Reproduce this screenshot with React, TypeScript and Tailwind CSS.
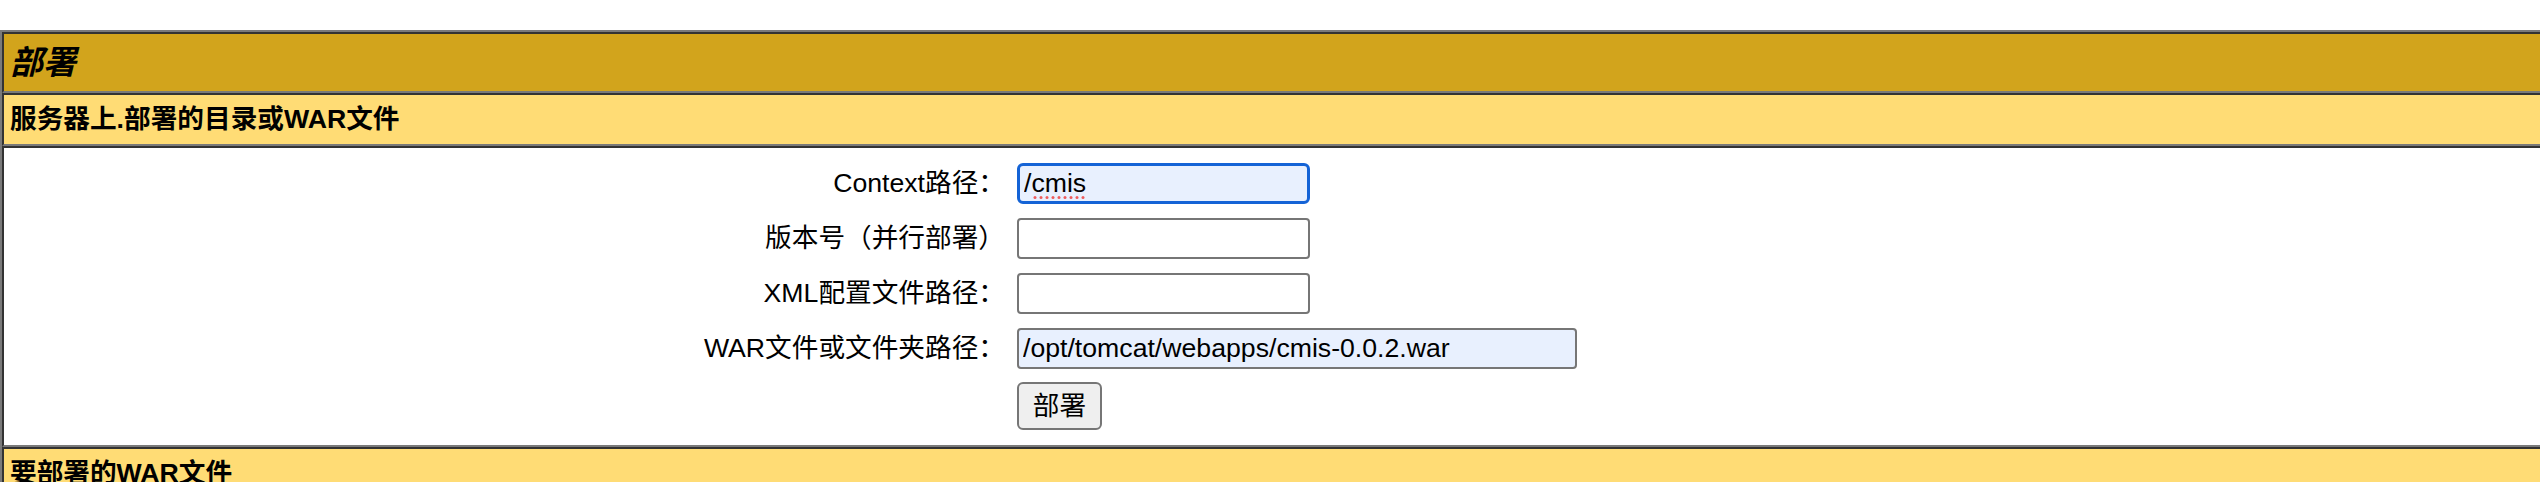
import React from "react";

const font = "font-['Liberation_Sans','Noto_Sans_CJK_SC',sans-serif]";

function Cell({
  className,
  children,
}: {
  className?: string;
  children?: React.ReactNode;
}) {
  return (
    <div
      className={`border-l-2 border-t-2 border-b-2 border-[#333333] border-b-[#7a7a7a] ${className ?? ""}`}
    >
      {children}
    </div>
  );
}

function SpellDots() {
  const xs = [0, 1, 2, 3, 4, 5, 6, 7, 8];
  return (
    <svg
      className="pointer-events-none absolute left-[15px] top-[32px]"
      width="56"
      height="5"
      viewBox="0 0 56 5"
    >
      {xs.map((i) => (
        <circle key={i} cx={3 + i * 6} cy={2.5} r={1.5} fill="#ee5b5b" />
      ))}
    </svg>
  );
}

type Row = {
  label: string;
  value?: string;
  wide?: boolean;
  focused?: boolean;
  filled?: boolean;
};

const rows: Row[] = [
  { label: "Context路径：", value: "/cmis", focused: true, filled: true },
  { label: "版本号（并行部署）" },
  { label: "XML配置文件路径：" },
  {
    label: "WAR文件或文件夹路径：",
    value: "/opt/tomcat/webapps/cmis-0.0.2.war",
    wide: true,
    filled: true,
  },
];

function Field({ row }: { row: Row }) {
  const width = row.wide ? "w-[560px]" : "w-[293px]";
  const bg = row.filled ? "bg-[#e8f0fe]" : "bg-white";
  const border = row.focused
    ? "border-[3px] border-[#1463d6] rounded-[6px] px-[4px]"
    : "border-2 border-[#767676] rounded-[4px] px-[4px]";
  return (
    <div className="relative">
      <input
        type="text"
        defaultValue={row.value ?? ""}
        spellCheck={false}
        className={`block h-[41px] ${width} ${bg} ${border} ${font} text-[26.67px] leading-[33px] text-black outline-none`}
      />
      {row.focused && <SpellDots />}
    </div>
  );
}

export default function App() {
  return (
    <div className={`h-[482px] w-full overflow-hidden bg-white pt-[30px] text-black ${font}`}>
      <div className="w-[2600px] border-l-2 border-t-2 border-[#7a7a7a]">
        <Cell className="bg-[#d2a41c] px-[6px] py-[6px]">
          <div className="text-[33px] font-bold italic leading-[45px]">部署</div>
        </Cell>
        <Cell className="bg-[#ffdc75] px-[6px] py-[6px]">
          <div className="text-[26.67px] font-bold leading-[37px]">
            服务器上.部署的目录或WAR文件
          </div>
        </Cell>
        <Cell className="bg-white pl-[6px] pt-[8px] pb-[9px]">
          <div className="grid grid-cols-[1001px_1fr]">
            {rows.map((row) => (
              <React.Fragment key={row.label}>
                <div className="flex h-[55px] items-center justify-end pr-[6px] text-[26.67px] leading-[37px]">
                  {row.label}
                </div>
                <div className="flex h-[55px] items-center pl-[6px]">
                  <Field row={row} />
                </div>
              </React.Fragment>
            ))}
            <div className="h-[60px]" />
            <div className="flex h-[60px] items-center pl-[6px]">
              <button
                type="button"
                className={`h-[48px] w-[85px] rounded-[6px] border-2 border-[#767676] bg-[#efefef] text-[26.67px] leading-[37px] text-black ${font}`}
              >
                部署
              </button>
            </div>
          </div>
        </Cell>
        <Cell className="bg-[#ffdc75] px-[6px] py-[6px]">
          <div className="text-[26.67px] font-bold leading-[37px]">要部署的WAR文件</div>
        </Cell>
      </div>
    </div>
  );
}
